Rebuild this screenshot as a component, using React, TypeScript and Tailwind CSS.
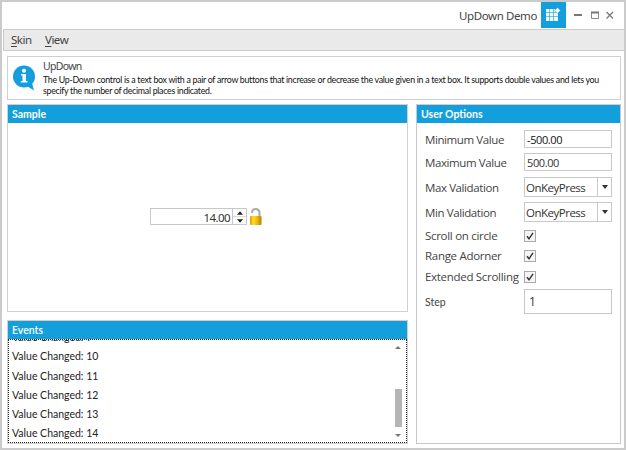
import type { ReactNode } from "react";

const options = "font-['Open_Sans','Noto_Sans',sans-serif]";
const ui = "font-['Noto_Sans','Open_Sans',sans-serif]";

function Header({ children, className }: { children: string; className: string }) {
  return (
    <div className="h-[19px] shrink-0 border-t border-[#dcc9bf] bg-[#139edc] pl-1 font-[Lato,sans-serif] leading-[18px] text-white">
      <span className={`block whitespace-nowrap ${className}`}>{children}</span>
    </div>
  );
}

function Row({ label, className, labelClass, children }: { label: string; className: string; labelClass: string; children: ReactNode }) {
  return (
    <div className={`flex shrink-0 items-center ${className}`}>
      <span className={`w-[100px] shrink-0 whitespace-nowrap pl-px text-[#444] ${labelClass}`}>{label}</span>
      {children}
    </div>
  );
}

function Check() {
  return (
    <span className="block h-[12px] w-[12px] border border-[#aaa] bg-[#f5f5f5]">
      <svg className="block" width="10" height="10" viewBox="0 0 10 10">
        <path d="M2 5.2 L4 7.8 L8 1.8" fill="none" stroke="#333" strokeWidth="1.4" />
      </svg>
    </span>
  );
}

function Combo() {
  return (
    <div className="flex h-[20px] w-[88px] border border-[#c9c9c9]">
      <span className="w-[72px] pl-px text-[11.5px] leading-[19px] tracking-[-0.5px] text-[#333]">OnKeyPress</span>
      <span className="flex flex-1 items-center justify-center border-l border-[#c9c9c9]">
        <svg width="6" height="4" viewBox="0 0 6 4"><path d="M0 0H6L3 4Z" fill="#333" /></svg>
      </span>
    </div>
  );
}

const events = [9, 10, 11, 12, 13, 14];
const label = "pt-[2px] text-[11.5px] tracking-[-0.4px]";
const checkLabel = "text-[11.5px] tracking-[-0.3px]";

export default function App() {
  return (
    <div className={`flex h-[450px] w-[626px] flex-col overflow-hidden border-2 border-[#cbcbcb] bg-white text-[#333] ${ui}`}>
      <div className="flex h-[27px] shrink-0 items-start justify-end">
        <span className="mt-[4px] mr-[4px] whitespace-nowrap text-[11.5px] leading-[19px] tracking-[-0.4px] text-[#444]">UpDown Demo</span>
        <span className="h-[26px] w-[25px] bg-[#139edc]">
          <svg width="25" height="26" viewBox="0 0 25 26">
            <path d="M5 7H14V10H17V19H5Z" fill="#f2fbff" />
            <path d="M5 10.5H17M5 14.5H17M8.5 7V19M12.5 7V19" stroke="#139edc" strokeWidth="0.8" strokeOpacity=".75" />
            <path d="M16.5 5.5L19.5 8.5L16.5 11.5L13.5 8.5Z" fill="#fff" stroke="#139edc" strokeWidth=".5" />
          </svg>
        </span>
        <svg className="ml-[1px]" width="57" height="26" viewBox="0 0 57 26">
          <path d="M7 13H15" stroke="#777" strokeWidth="2" />
          <path d="M24.5 10.5H31.5V16.5H24.5Z" fill="none" stroke="#888" />
          <path d="M24 10.5H32" stroke="#777" strokeWidth="2" />
          <path d="M39.5 10L46 16.5M46 10L39.5 16.5" stroke="#777" strokeWidth="1.3" />
        </svg>
      </div>
      <div className="ml-px flex h-[22px] shrink-0 items-center border border-r-0 border-[#ccc] bg-[#eaeaea] pl-[7px] text-[11.5px] leading-[20px] tracking-[-0.5px] text-[#444]">
        <span className="w-[34px]"><u className="underline-offset-2">S</u>kin</span>
        <span><u className="underline-offset-2">V</u>iew</span>
      </div>
      <div className="mt-[5px] ml-[5px] flex h-[44px] w-[614px] shrink-0 border border-[#d0d0d0]">
        <svg className="mt-[8px] ml-[5px] shrink-0" width="24" height="27" viewBox="0 0 24 27">
          <ellipse cx="11" cy="11.5" rx="11" ry="11" fill="#139edc" />
          <path d="M14 21L21 25.5L19 18Z" fill="#139edc" />
          <circle cx="11" cy="5.8" r="2" fill="#fff" />
          <path d="M8 9H13V16H14.5V17.5H7.8V16H9.5V10.5H8Z" fill="#fff" />
        </svg>
        <div className="pt-px pl-[6px] whitespace-nowrap">
          <div className="text-[10.5px] leading-[17px] tracking-[-0.7px] text-[#444]">UpDown</div>
          <div className="font-[Lato,sans-serif] text-[8.8px] leading-[10.7px] tracking-[-0.28px] text-[#111]">
            The Up-Down control is a text box with a pair of arrow buttons that increase or decrease the value given in a text box. It supports double values and lets you<br />
            specify the number of decimal places indicated.
          </div>
        </div>
      </div>
      <div className="mt-[4px] ml-[5px] flex h-[340px] shrink-0 gap-2">
        <div className="flex w-[401px] flex-col gap-2">
          <section className="flex h-[208px] flex-col border border-t-0 border-[#d0d0d0]">
            <Header className="text-[10.5px] font-bold">Sample</Header>
            <div className="flex pt-[85px] pl-[142px]">
              <div className="flex h-[17px] w-[97px] border border-[#c9c9c9]">
                <span className="w-[81px] pr-[2px] text-right text-[11.5px] leading-[17px] tracking-[-0.6px]">14.00</span>
                <span className="flex flex-1 flex-col items-center justify-evenly border-l border-[#c9c9c9]">
                  <svg width="6" height="4" viewBox="0 0 7 4"><path d="M0 4H7L3.5 0Z" fill="#222" /></svg>
                  <span className="h-px w-full bg-[#ddd]" />
                  <svg width="6" height="4" viewBox="0 0 7 4"><path d="M0 0H7L3.5 4Z" fill="#222" /></svg>
                </span>
              </div>
              <svg className="ml-[2px]" width="14" height="18" viewBox="0 0 14 18">
                <defs>
                  <linearGradient id="gold">
                    <stop offset="0" stopColor="#d79a10" /><stop offset=".3" stopColor="#ffdf2b" />
                    <stop offset=".65" stopColor="#e9b50a" /><stop offset="1" stopColor="#b87d08" />
                  </linearGradient>
                </defs>
                <path d="M3 5V4Q3.5 1 6.5 1Q10.5 1 10.5 5V9" fill="none" stroke="#aaa" strokeWidth="2" />
                <rect x="1" y="8" width="11.5" height="9" rx="1" fill="url(#gold)" />
              </svg>
            </div>
          </section>
          <section className="flex h-[124px] flex-col border border-t-0 border-[#d0d0d0]">
            <Header className="text-[10.5px] font-semibold">Events</Header>
            <div className="flex min-h-0 flex-1 justify-between overflow-hidden border border-dotted border-[#222]">
              <div className="mt-[-12px] pl-[3px] font-[Lato,sans-serif] text-[10.5px] text-[#222]">
                {events.map((n) => <div key={n} className="h-[19.3px] leading-[19.3px] whitespace-nowrap">Value Changed: {n}</div>)}
              </div>
              <div className="flex w-[16px] flex-col items-center pt-[6px]">
                <svg width="6" height="3" viewBox="0 0 6 3"><path d="M0 3H6L3 0Z" fill="#777" /></svg>
                <span className="mt-[40px] h-[38px] w-[7px] bg-[#b5b5b5]" />
                <svg className="mt-[7px]" width="6" height="3" viewBox="0 0 6 3"><path d="M0 0H6L3 3Z" fill="#777" /></svg>
              </div>
            </div>
          </section>
        </div>
        <section className={`flex w-[205px] flex-col border border-t-0 border-[#c8c8c8] ${options}`}>
          <Header className="text-[10.5px] font-bold">User Options</Header>
          <div className="flex flex-col pl-[7px]">
            <Row className="mt-[7px] h-[18px]" labelClass={label} label="Minimum Value">
              <div className="h-[18px] w-[88px] border border-[#c9c9c9] pl-[2px] text-[11px] leading-[17px] tracking-[-0.4px] text-[#111]">-500.00</div>
            </Row>
            <Row className="mt-[5px] h-[18px]" labelClass={label} label="Maximum Value">
              <div className="h-[18px] w-[88px] border border-[#c9c9c9] pl-[2px] text-[11px] leading-[17px] tracking-[-0.4px]">500.00</div>
            </Row>
            <Row className="mt-[6px] h-[20px]" labelClass={label} label="Max Validation"><Combo /></Row>
            <Row className="mt-[5px] h-[20px]" labelClass={label} label="Min Validation"><Combo /></Row>
            <Row className="mt-[8px] h-[12px]" labelClass={checkLabel} label="Scroll on circle"><Check /></Row>
            <Row className="mt-[8px] h-[12px]" labelClass={checkLabel} label="Range Adorner"><Check /></Row>
            <Row className="mt-[9px] h-[12px]" labelClass={checkLabel} label="Extended Scrolling"><Check /></Row>
            <Row className="mt-[6px] h-[25px]" labelClass="pt-[2px] font-[Lato,sans-serif] text-[10.5px]" label="Step">
              <div className="h-[25px] w-[88px] border border-[#c9c9c9] pl-[4px] text-[12px] leading-[24px]">1</div>
            </Row>
          </div>
        </section>
      </div>
    </div>
  );
}
